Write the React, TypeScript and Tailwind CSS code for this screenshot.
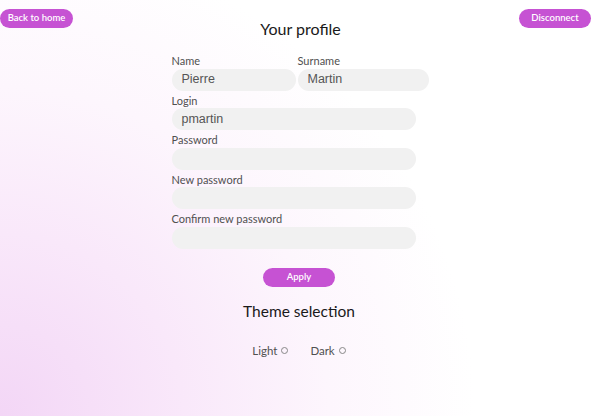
import React from "react";

function Field({ label, value, className }: { label: string; value?: string; className?: string }) {
  return (
    <div className={"flex flex-col " + (className ?? "")}>
      <label className="text-[11px] leading-[13px] text-[#505050] h-[17.5px] pt-[3px]">{label}</label>
      <div className="h-[22px] rounded-full bg-[#f1f1f1] flex items-center pl-[10px] text-[12.5px] text-[#555] font-['Liberation_Sans',sans-serif]">
        {value}
      </div>
    </div>
  );
}

export default function App() {
  return (
    <div className="min-h-screen w-full bg-[radial-gradient(circle_at_0%_100%,#f3d6f6_0%,#f9e8fa_25%,#fdf6fd_45%,#ffffff_65%)] font-['Lato',sans-serif] text-[#222]">
      <div className="grid grid-cols-[1fr_auto_1fr] items-start pt-[9px]">
        <div className="flex">
          <button className="h-[19px] w-[73px] rounded-full bg-[#c652d3] text-white text-[9.5px] font-semibold">
            Back to home
          </button>
        </div>
        <h1 className="text-[16px] leading-[20px] mt-[10px] text-[#1a1a1a]">Your profile</h1>
        <div className="flex justify-end">
          <button className="h-[19px] w-[72px] rounded-full bg-[#c652d3] text-white text-[9.5px] font-semibold mr-[10px]">
            Disconnect
          </button>
        </div>
      </div>
      <div className="mx-auto w-[258px] mt-[12px] flex flex-col">
        <div className="flex gap-[2px]">
          <Field label="Name" value="Pierre" className="w-[124px]" />
          <Field label="Surname" value="Martin" className="w-[131px]" />
        </div>
        <Field label="Login" value="pmartin" className="w-[244px]" />
        <Field label="Password" className="w-[244px]" />
        <Field label="New password" className="w-[244px]" />
        <Field label="Confirm new password" className="w-[244px]" />
      </div>
      <div className="flex flex-col items-center pr-[3px]">
        <button className="mt-[19px] h-[19px] w-[72px] rounded-full bg-[#c652d3] text-white text-[9.5px] font-semibold">
          Apply
        </button>
        <h2 className="mt-[14px] text-[15.5px] leading-[20px] text-[#1a1a1a]">Theme selection</h2>
        <div className="mt-[21px] flex gap-[22px] text-[11.5px] text-[#505050]">
          <label className="flex items-center gap-[4px]">
            Light <span className="inline-block w-[7px] h-[7px] rounded-full border border-[#888]" />
          </label>
          <label className="flex items-center gap-[4px]">
            Dark <span className="inline-block w-[7px] h-[7px] rounded-full border border-[#888]" />
          </label>
        </div>
      </div>
    </div>
  );
}
